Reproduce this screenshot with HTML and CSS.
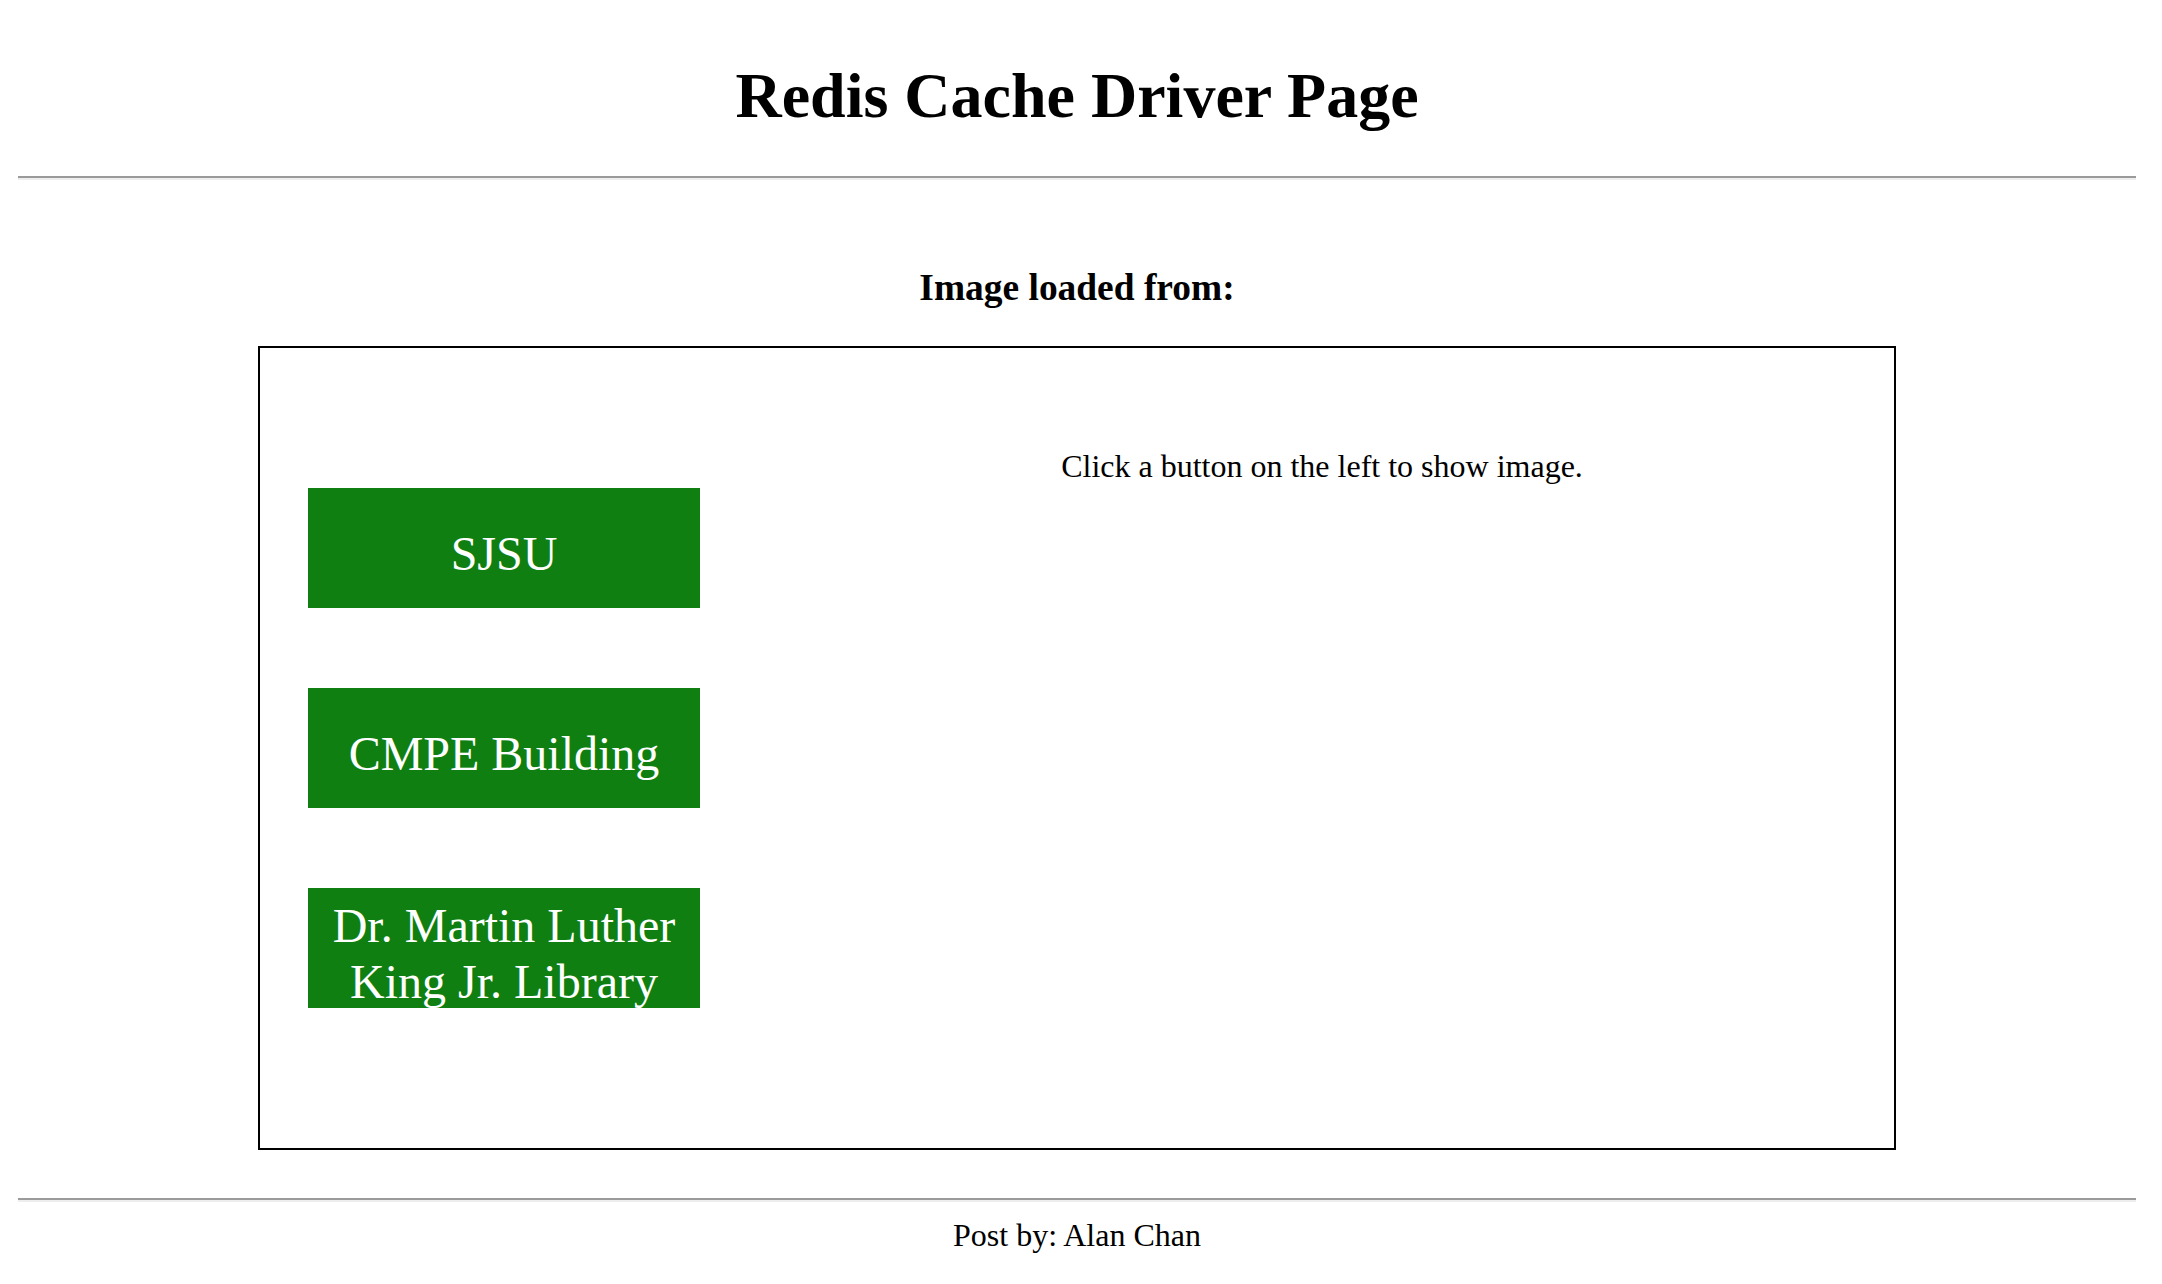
FILE: index.html
```html
<!DOCTYPE html>
<html lang="en">
<head>
<meta charset="utf-8">
<title>Redis Cache Driver Page</title>
<link rel="stylesheet" href="styles.css">
</head>
<body>
<div class="page">
  <h1 class="title">Redis Cache Driver Page</h1>
  <hr class="rule rule-top">
  <h3 class="subtitle">Image loaded from:</h3>
  <div class="panel">
    <div class="buttons">
      <div class="btn">SJSU</div>
      <div class="btn">CMPE Building</div>
      <div class="btn">Dr. Martin Luther King Jr. Library</div>
    </div>
    <div class="viewer">
      <p class="hint">Click a button on the left to show image.</p>
    </div>
  </div>
  <hr class="rule rule-bottom">
  <div class="footer">Post by: Alan Chan</div>
</div>
</body>
</html>
```

FILE: styles.css
```css
html, body {
  margin: 0;
  padding: 0;
  background: #ffffff;
}

body {
  font-family: "Liberation Serif", "Times New Roman", serif;
  color: #000000;
  font-size: 32px;
  line-height: 1.15;
}

.page {
  padding: 0 26px 0 18px;
}

.title {
  margin: 59px 0 0;
  font-size: 64px;
  font-weight: bold;
  line-height: 1.15;
  text-align: center;
}

.rule {
  margin: 0;
  height: 0;
  border: 0;
  border-top: 2px solid #9a9a9a;
  border-bottom: 2px solid #eeeeee;
}

.rule-top {
  margin-top: 43px;
}

.subtitle {
  margin: 86px 0 37px;
  font-size: 37.44px;
  font-weight: bold;
  line-height: 1.15;
  text-align: center;
}

.panel {
  width: 1634px;
  margin: 0 auto;
  border: 2px solid #000000;
  display: grid;
  grid-template-columns: 490px 1fr;
}

.buttons {
  display: flex;
  flex-direction: column;
  gap: 80px;
  padding: 140px 0 140px 48px;
}

.btn {
  width: 392px;
  height: 120px;
  box-sizing: border-box;
  padding: 12px 10px 0;
  background: #107f12;
  color: #ffffff;
  font-size: 48px;
  line-height: 1.15;
  text-align: center;
  display: flex;
  align-items: center;
  justify-content: center;
  overflow: hidden;
}

.viewer {
  padding-top: 100px;
  text-align: center;
}

.hint {
  margin: 0;
  font-size: 32px;
}

.rule-bottom {
  margin-top: 48px;
}

.footer {
  margin-top: 15px;
  text-align: center;
  font-size: 32px;
}
```
